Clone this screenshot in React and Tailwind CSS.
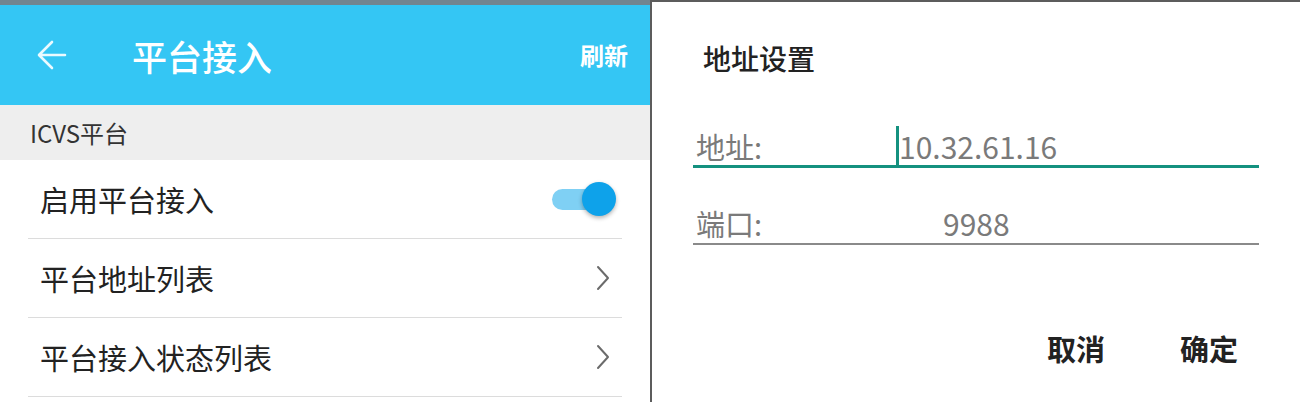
import React from 'react';

function Chevron() {
    return (
        <svg width="14" height="26" viewBox="0 0 14 26" fill="none" stroke="#6b6b6b" strokeWidth="2" strokeLinecap="round" strokeLinejoin="round">
            <path d="M2 2l10 11L2 24" />
        </svg>
    );
}

function Toggle() {
    return (
        <div className="relative w-[64px] h-[34px] flex items-center">
            <div className="w-[58px] h-[21px] rounded-full bg-[#7fd0f4]"></div>
            <div className="absolute right-0 top-0 w-[34px] h-[34px] rounded-full bg-[#0ea2ea] shadow-[0_2px_4px_rgba(0,0,0,0.3)]"></div>
        </div>
    );
}

export default function App() {
    const rows = [
        { label: '启用平台接入', type: 'toggle' },
        { label: '平台地址列表', type: 'chevron' },
        { label: '平台接入状态列表', type: 'chevron' },
    ];

    return (
        <div className="w-[1300px] h-[402px] flex overflow-hidden bg-white font-['Noto_Sans_CJK_SC','Noto_Sans',sans-serif]">
            {/* left: settings list */}
            <div className="w-[650px] flex flex-col">
                <div className="h-[5px] bg-[#718590]"></div>
                <div className="h-[100px] bg-[#34c6f4] flex items-center text-white">
                    <div className="w-[132px] pl-[37px]">
                        <svg width="30" height="30" viewBox="0 0 30 30" fill="none" stroke="#eafaff" strokeWidth="2.6" strokeLinecap="round" strokeLinejoin="round">
                            <path d="M28 15H3M15 2L2 15l13 13" />
                        </svg>
                    </div>
                    <div className="flex-1 text-[35px] font-medium leading-none">平台接入</div>
                    <div className="pr-[22px] text-[24px] font-bold leading-none">刷新</div>
                </div>
                <div className="h-[55px] bg-[#eeeeee] flex items-center pl-[30px] text-[24px] text-[#333]">ICVS平台</div>
                <div className="px-[28px]">
                    {rows.map((r) => (
                        <div key={r.label} className={`flex items-center justify-between border-b border-[#dcdcdc] pl-[12px] ${r.type === 'toggle' ? 'h-[79px] pr-[6px]' : 'h-[79px] pr-[12px]'}`}>
                            <span className="text-[29px] text-[#222] leading-none">{r.label}</span>
                            {r.type === 'toggle' ? <Toggle /> : <Chevron />}
                        </div>
                    ))}
                </div>
            </div>

            {/* right: address dialog */}
            <div className="flex-1 border-l-2 border-t-2 border-[#5c5c5c] flex flex-col">
                <div className="h-[112px] flex items-center pl-[51px] text-[28px] font-medium text-[#222]">地址设置</div>
                <div className="mx-[41px] h-[54px] border-b-[3px] border-[#14917f] flex items-end pb-[3px]">
                    <span className="w-[203px] pl-[3px] text-[29px] text-[#7a7a7a] leading-[32px]">地址:</span>
                    <span className="w-[3px] h-[39px] bg-[#14917f] mb-[-3px]"></span>
                    <span className="text-[30px] text-[#7a7a7a] leading-[32px]">10.32.61.16</span>
                </div>
                <div className="mx-[41px] h-[77px] border-b-2 border-[#8a8a8a] flex items-end pb-[4px]">
                    <span className="w-[250px] pl-[3px] text-[29px] text-[#7a7a7a] leading-[32px]">端口:</span>
                    <span className="text-[30px] text-[#7a7a7a] leading-[32px]">9988</span>
                </div>
                <div className="mt-[74px] h-[60px] flex items-center justify-end pr-[62px] gap-[75px] text-[29px] font-bold text-[#222]">
                    <span>取消</span>
                    <span>确定</span>
                </div>
            </div>
        </div>
    );
}
